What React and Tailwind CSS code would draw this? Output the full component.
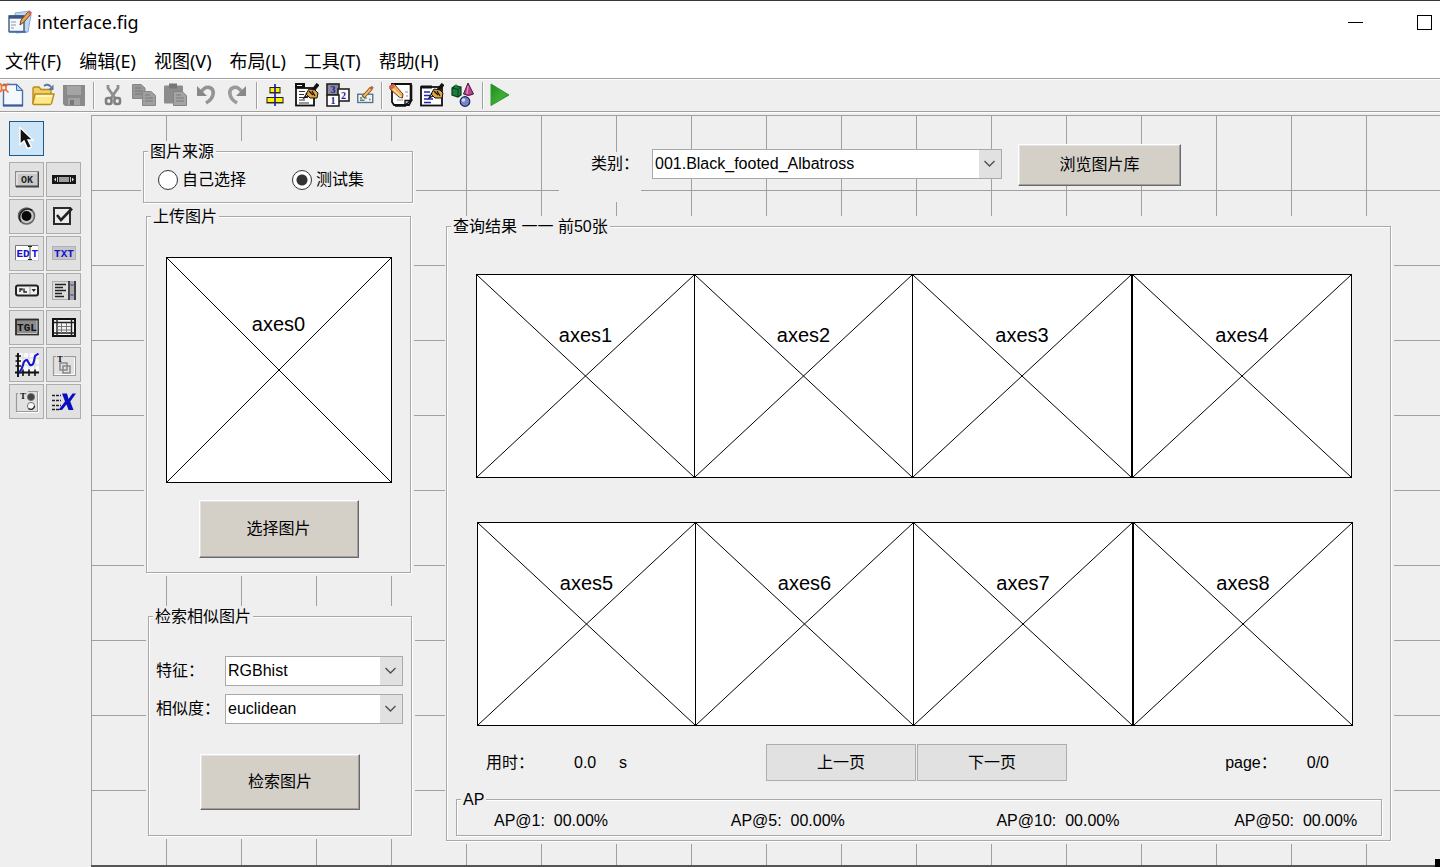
import React from "react";

const CJK = "font-['Liberation_Sans','Noto_Sans_CJK_SC',sans-serif]";

function Icon({ size = 24, children }) {
  return (
    <svg width={size} height={size} viewBox="0 0 24 24" fill="none" aria-hidden="true">
      {children}
    </svg>
  );
}

/* ---------- toolbar drawings ---------- */

const NewFile = () => (
  <Icon>
    <path d="M3.500 1.500H16.500L22.500 7.500V22.500H3.500Z" fill="#f4f9ff" stroke="#4a6fae" strokeWidth="1.400" />
    <path d="M16.500 1.500V7.500H22.500Z" fill="#b9d2f2" stroke="#4a6fae" />
    <path d="M3 22.500H23" stroke="#38589a" strokeWidth="2" />
    <rect x="1.500" y="2.500" width="4.500" height="4.500" fill="#fff0c8" stroke="#ee6a35" strokeWidth="1.600" />
    <path d="M0 0.500L1.500 2M8.500 0.500L6 3M8.500 9.500L6 7M0 9L1.500 7.500" stroke="#ee6a35" strokeWidth="1.600" />
  </Icon>
);
const OpenFile = () => (
  <Icon>
    <path d="M2 21V5.500Q2 4 3.500 4H8L10 6.500H20V11" fill="#f2cf62" stroke="#b98a1c" strokeWidth="1.400" />
    <path d="M4 11H23L20.500 20.500Q20 21.500 18.500 21.500H3Q1.500 21.500 2 20Z" fill="#fde98a" stroke="#b98a1c" strokeWidth="1.400" />
    <path d="M5 13H21" stroke="#fffbd8" strokeWidth="1.500" />
    <path d="M13 3Q17 0 20 4" stroke="#5878a0" strokeWidth="1.800" />
    <path d="M22.500 1.500V7H17Z" fill="#5878a0" />
  </Icon>
);
const Save = () => (
  <Icon>
    <path d="M1 2H23V23H3L1 21Z" fill="#8a8a8a" />
    <rect x="5" y="3" width="14" height="9" fill="#a4a4a4" />
    <rect x="6" y="15" width="12" height="7" fill="#a2a2a2" />
    <rect x="8" y="17" width="4" height="5" fill="#777" />
  </Icon>
);
const Cut = () => (
  <Icon>
    <path d="M7 2V5L14 15M17 2V5L10 15" stroke="#8f8f8f" strokeWidth="2.800" />
    <rect x="5" y="15" width="5.500" height="6" rx="2" stroke="#7f7f7f" strokeWidth="2.600" />
    <rect x="13.500" y="15" width="5.500" height="6" rx="2" stroke="#7f7f7f" strokeWidth="2.600" />
  </Icon>
);
const Copy = () => (
  <Icon>
    <path d="M0.500 1.500H9L13 5V15.500H0.500Z" fill="#989898" stroke="#878787" />
    <path d="M3 5H9M3 8H10M3 11H10" stroke="#7b7b7b" />
    <path d="M10.500 8.500H19L23.500 12.500V22.500H10.500Z" fill="#a0a0a0" stroke="#878787" />
    <path d="M13 12H18M13 15H21M13 18H21" stroke="#7b7b7b" />
  </Icon>
);
const Paste = () => (
  <Icon>
    <rect x="1" y="2.500" width="19" height="18" rx="1" fill="#8c8c8c" />
    <rect x="6" y="0.500" width="8" height="5" fill="#777" />
    <path d="M10.500 8.500H19L23.500 12.500V22.500H10.500Z" fill="#a4a4a4" stroke="#838383" />
    <path d="M13 12H18M13 15H21M13 18H21" stroke="#7b7b7b" />
  </Icon>
);
const Undo = () => (
  <Icon>
    <path d="M7 9Q11 3 15.500 4.500Q20 6 19 11.500Q18 16.500 12 20" stroke="#939393" strokeWidth="3.600" />
    <path d="M3 3V13H13Z" fill="#888" />
  </Icon>
);
const Redo = () => (
  <Icon>
    <path d="M17 9Q13 3 8.500 4.500Q4 6 5 11.500Q6 16.500 12 20" stroke="#9b9b9b" strokeWidth="3.600" />
    <path d="M21 3V13H11Z" fill="#888" />
  </Icon>
);
const Align = () => (
  <Icon>
    <rect x="6" y="4.500" width="10" height="5" fill="#ffee00" stroke="#222" />
    <rect x="3" y="14.500" width="16" height="5" fill="#ffee00" stroke="#222" />
    <path d="M11 1V23" stroke="#1414b8" strokeWidth="1.600" />
    <path d="M5.500 10H16.500M2.500 20H19.500" stroke="#333" />
  </Icon>
);
const Hand = () => (
  <>
    <path d="M23 1L16 10" stroke="#111" strokeWidth="3.600" />
    <path d="M11 11L14 6L20 7L23 10L22 15L15 15Z" fill="#e0a63c" stroke="#111" />
    <path d="M12 10L9 15L13 13M14 8L18 12M17 8L20 13" stroke="#111" strokeWidth="1.200" />
  </>
);
const MenuEditor = () => (
  <Icon>
    <rect x="0" y="0" width="10" height="5" fill="#111" />
    <path d="M2 2.500H7" stroke="#fff" />
    <rect x="1" y="5" width="18" height="17.500" fill="#fff" stroke="#111" strokeWidth="1.800" />
    <path d="M4 8.500H10M4 11.500H9M4 14.500H13M4 17H10M4 20H14" stroke="#333" />
    <Hand />
  </Icon>
);
const TabOrder = () => (
  <Icon>
    <rect x="1" y="1" width="12" height="11" fill="#8a8a9c" stroke="#222" strokeWidth="1.600" />
    <rect x="12" y="6" width="11" height="12" fill="#fff" stroke="#222" strokeWidth="1.600" />
    <rect x="1" y="12" width="12" height="11" fill="#fff" stroke="#222" strokeWidth="1.600" />
    <g className="font-['Liberation_Serif',serif]" fontWeight="700" fontSize="10" fill="#1c1c98" textAnchor="middle">
      <text x="7" y="10">3</text>
      <text x="17.500" y="15.500">2</text>
      <text x="7" y="21">1</text>
    </g>
  </Icon>
);
const ToolbarEditor = () => (
  <Icon size={18}>
    <rect x="1" y="11" width="20" height="11" fill="#eef3fa" stroke="#58708c" strokeWidth="1.800" />
    <path d="M4 16H7M10 16H13M16 18H18M4 19H10" stroke="#4a8a6a" strokeWidth="2" />
    <path d="M8 15L19 3" stroke="#7a4a1c" strokeWidth="5" />
    <path d="M9 14L19 3" stroke="#f3c05e" strokeWidth="2.600" />
    <path d="M18 4L21 1" stroke="#c85846" strokeWidth="4" />
  </Icon>
);
const MFile = () => (
  <Icon>
    <path d="M3 1H22V18L20 22H5L3 19Z" fill="#fff" stroke="#111" strokeWidth="1.800" />
    <path d="M22 2V18M17 22.500H6" stroke="#111" strokeWidth="2.600" />
    <path d="M16 22V17.500L22 17.500Z" fill="#ddd" stroke="#111" strokeWidth="1.400" />
    <path d="M8 17H14M16 9H19M17 13H19" stroke="#8a94a0" />
    <path d="M1 3L5 1L14 11L13.500 15L10 14L1 6Z" fill="#f0b060" stroke="#6a3a18" />
    <path d="M0 3L4 1L6 4L2 7Z" fill="#d8604c" />
    <path d="M4 6L12 14" stroke="#fce0a8" strokeWidth="1.400" />
  </Icon>
);
const PropertyInspector = () => (
  <Icon>
    <rect x="1" y="4" width="21" height="18.500" fill="#fff" stroke="#111" strokeWidth="1.800" />
    <path d="M1 4H12" stroke="#111" strokeWidth="3" />
    <path d="M4 9H10M4 12.500H10M4 16H13M4 19.500H11" stroke="#2424b4" strokeWidth="1.500" />
    <Hand />
  </Icon>
);
const ObjectBrowser = () => (
  <Icon>
    <path d="M1 5L4 3L10 4V12L7 14L1 12Z" fill="#18803c" stroke="#0b3c1c" strokeWidth="1.200" />
    <path d="M1 5L7 6.500L10 4M7 6.500V14" stroke="#0b3c1c" />
    <path d="M5 1V4M3 2.500H7" stroke="#2a9a4a" />
    <path d="M17 0L22.500 11Q17.500 14 12.500 11Z" fill="#b8408c" stroke="#4a1638" />
    <path d="M17 3L16 11" stroke="#e48cc4" strokeWidth="1.400" />
    <circle cx="14" cy="18.500" r="4.800" fill="#7484c8" stroke="#1c2450" strokeWidth="1.200" />
    <circle cx="12.500" cy="17" r="1.800" fill="#d4dcfa" />
  </Icon>
);
const Run = () => (
  <Icon>
    <defs>
      <linearGradient id="run" x1="0" y1="0" x2="1" y2="1">
        <stop offset="0" stopColor="#1f8a1f" />
        <stop offset="0.600" stopColor="#3fae35" />
        <stop offset="1" stopColor="#1d7a1d" />
      </linearGradient>
    </defs>
    <path d="M1 1L19 12L1 22.500Z" fill="url(#run)" stroke="#2f9a2c" />
  </Icon>
);

/* ---------- palette drawings ---------- */

const Arrow = () => (
  <Icon>
    <path d="M5 0.500V17.500L9 14L12.500 21.500L16.500 20L13 13H18Z" fill="#111" stroke="#fff" strokeWidth="1.400" />
  </Icon>
);
const PixelText = ({ y = 15, fill, children, size = 9 }) => (
  <text x="12" y={y} textAnchor="middle" fontSize={size} fontWeight="700" fill={fill} className="font-['Liberation_Mono',monospace]">
    {children}
  </text>
);
const PushButton = () => (
  <Icon>
    <rect x="0.500" y="3.500" width="23" height="15" fill="#c9c9c9" stroke="#8a8a8a" />
    <path d="M1 18.500H23.500V4" stroke="#444" strokeWidth="1.800" />
    <path d="M2 17V5H22" stroke="#f5f5f5" />
    <PixelText fill="#222" y={14.500} size={10}>OK</PixelText>
  </Icon>
);
const SliderIcon = () => (
  <Icon>
    <rect x="0" y="7" width="24" height="9" fill="#161616" />
    <rect x="7" y="9" width="10" height="5" fill="#9d9d9d" />
    <path d="M2 11.500L4 9.500V13.500ZM22 11.500L20 9.500V13.500Z" fill="#ddd" />
    <path d="M5.500 9V14M18.500 9V14" stroke="#ccc" />
  </Icon>
);
const RadioIcon = () => (
  <Icon>
    <circle cx="11.500" cy="11" r="8" fill="#c9c9c9" stroke="#666" strokeWidth="1.600" />
    <path d="M5.900 16.500A8 8 0 0 1 17.100 5.500" stroke="#222" strokeWidth="1.800" />
    <circle cx="11.500" cy="11" r="5" fill="#080808" />
  </Icon>
);
const CheckIcon = () => (
  <Icon>
    <rect x="2" y="3" width="16" height="16" fill="#ececec" stroke="#2b2b2b" strokeWidth="2" />
    <path d="M5 10L9 15L20 3.500" stroke="#222" strokeWidth="2.600" />
  </Icon>
);
const EditIcon = () => (
  <Icon>
    <rect x="0.500" y="3.500" width="23" height="15" fill="#fff" stroke="#ccc" />
    <path d="M0.500 18V3.500H23" stroke="#777" />
    <text x="1.500" y="14.500" fontSize="11" fontWeight="700" fill="#1414d2" className="font-['Liberation_Mono',monospace]">ED</text>
    <text x="16.500" y="14.500" fontSize="11" fontWeight="700" fill="#1414d2" className="font-['Liberation_Mono',monospace]">T</text>
    <path d="M13 4.500H17M13 17.500H17M15 4V18" stroke="#222" />
  </Icon>
);
const TxtIcon = () => (
  <Icon>
    <rect x="0.500" y="4.500" width="23" height="13" fill="#c6c6c6" stroke="#b2b2b2" />
    <PixelText fill="#1414d2" y={14.500} size={11}>TXT</PixelText>
  </Icon>
);
const PopupIcon = () => (
  <Icon>
    <rect x="1" y="6.500" width="22" height="10" rx="2" fill="#f2f2f2" stroke="#222" strokeWidth="2" />
    <path d="M15 7.500V15.500" stroke="#999" />
    <path d="M5 13V10H7V11.500M9 9.500V13H12" stroke="#222" strokeWidth="1.400" />
    <path d="M16.500 10H21L18.800 13Z" fill="#222" />
  </Icon>
);
const ListIcon = () => (
  <Icon>
    <rect x="0.500" y="2.500" width="23" height="18" fill="#dcdcdc" stroke="#aaa" />
    <path d="M3 5.500H14M3 8.500H11M3 11.500H14M3 14.500H10M3 17.500H12" stroke="#222" strokeWidth="1.600" />
    <rect x="18" y="3" width="4.500" height="17" fill="#aaa" />
    <path d="M17 2V21M23 2V21" stroke="#222" strokeWidth="1.600" />
    <path d="M18.500 6H21.500M18.500 16H21.500" stroke="#4455dd" strokeWidth="1.500" />
  </Icon>
);
const ToggleIcon = () => (
  <Icon>
    <rect x="1" y="3.500" width="22" height="15" fill="#8c8c8c" stroke="#2d2d2d" strokeWidth="1.800" />
    <path d="M2 17.500H22V4.500" stroke="#c4c4c4" />
    <PixelText fill="#111" y={14.500} size={11}>TGL</PixelText>
  </Icon>
);
const TableIcon = () => (
  <Icon>
    <rect x="1" y="3" width="22" height="17" fill="#f4f4f4" stroke="#111" strokeWidth="2" />
    <path d="M5 3V20M19.500 3V20M1 6.500H23M1 17H23" stroke="#222" strokeWidth="1.400" />
    <path d="M9.500 7V17M14.500 7V17M5 10.500H19M5 14H19" stroke="#777" />
  </Icon>
);
const AxesIcon = () => (
  <Icon>
    <rect x="4" y="0" width="20" height="18" fill="#f8f8f8" />
    <path d="M8 0V18M14 0V18M20 0V18M4 5H24M4 12H24" stroke="#d5d5d5" />
    <path d="M3 0V24M0 19.500H24" stroke="#111" strokeWidth="1.900" />
    <path d="M0.500 3H6M0.500 8H6M0.500 13H6M8 16.500V23M14 16.500V23M20 16.500V23" stroke="#111" strokeWidth="1.600" />
    <path d="M4 20Q7 16 8 12Q9 7 12 7L15 12Q18 13 19 8L20 3L23.500 0.500" stroke="#1414d2" strokeWidth="2.100" />
  </Icon>
);
const SmallT = () => (
  <text x="5" y="9" fontSize="9" fontWeight="700" fill="#111" className="font-['Liberation_Serif',serif]">T</text>
);
const PanelIcon = () => (
  <Icon>
    <path d="M4 3.500H1.500V22.500H23.500V3.500H12" stroke="#9a9a9a" strokeWidth="1.200" />
    <path d="M2.500 21.500H22.500V5" stroke="#fff" />
    <SmallT />
    <rect x="8" y="10" width="7" height="7" stroke="#888" strokeWidth="1.500" />
    <rect x="11" y="13" width="7" height="7" stroke="#888" strokeWidth="1.500" />
  </Icon>
);
const ButtonGroupIcon = () => (
  <Icon>
    <path d="M3 3.500H1.500V21.500H22.500V1.500H13" stroke="#9a9a9a" strokeWidth="1.200" />
    <path d="M2.500 22.500H23.500V2" stroke="#fff" />
    <SmallT />
    <circle cx="16" cy="7" r="3.600" fill="#444" stroke="#777" />
    <circle cx="16" cy="16" r="3.600" fill="#f6f6f6" stroke="#777" />
    <path d="M13.500 18.500A3.600 3.600 0 0 0 19.500 16" stroke="#222" strokeWidth="1.300" />
  </Icon>
);
const ActiveXIcon = () => (
  <Icon>
    <path d="M0 5.500H9M0 10.500H9M0 15.500H9M0 19.500H7" stroke="#222" strokeWidth="1.400" strokeDasharray="3 1" />
    <path d="M10 3.500H15L16.500 9L20.500 3.500H24L18.300 11.500L21.500 20H16.500L14.500 14.500L10 20H6.500L13 11.500Z" fill="#0c0cc0" />
  </Icon>
);

/* ---------- controls ---------- */

const TOOLS = [
  ["New", NewFile],
  ["Open", OpenFile],
  ["Save", Save],
  null,
  ["Cut", Cut],
  ["Copy", Copy],
  ["Paste", Paste],
  ["Undo", Undo],
  ["Redo", Redo],
  null,
  ["Align Objects", Align],
  ["Menu Editor", MenuEditor],
  ["Tab Order Editor", TabOrder],
  ["Toolbar Editor", ToolbarEditor],
  null,
  ["Editor", MFile],
  ["Property Inspector", PropertyInspector],
  ["Object Browser", ObjectBrowser],
  null,
  ["Run", Run],
];

const PALETTE = [
  ["Push Button", PushButton],
  ["Slider", SliderIcon],
  ["Radio Button", RadioIcon],
  ["Check Box", CheckIcon],
  ["Edit Text", EditIcon],
  ["Static Text", TxtIcon],
  ["Pop-up Menu", PopupIcon],
  ["Listbox", ListIcon],
  ["Toggle Button", ToggleIcon],
  ["Table", TableIcon],
  ["Axes", AxesIcon],
  ["Panel", PanelIcon],
  ["Button Group", ButtonGroupIcon],
  ["ActiveX Control", ActiveXIcon],
];

function Panel({ title, className = "", bodyClass = "", children }) {
  return (
    <div className={`bg-[#efefef] ${className}`}>
      <fieldset className="min-w-0 border border-[#a9a9a9] shadow-[1px_1px_0_#fff,inset_1px_1px_0_#fff]">
        <legend className="ml-1 h-5 bg-[#efefef] px-0.5 leading-[22px]">{title}</legend>
        <div className={bodyClass}>{children}</div>
      </fieldset>
    </div>
  );
}

function Axes({ name, className = "" }) {
  return (
    <div className={`relative border border-black bg-white ${className}`}>
      <svg className="absolute inset-0 h-full w-full" viewBox="0 0 100 100" preserveAspectRatio="none" aria-hidden="true">
        <path d="M0 0L100 100M100 0L0 100" stroke="#000" vectorEffect="non-scaling-stroke" />
      </svg>
      <div className="relative flex h-[59%] items-center justify-center text-xl leading-6">{name}</div>
    </div>
  );
}

function Raised({ className = "", children }) {
  return (
    <button
      type="button"
      className={`border border-t-white border-r-[#696969] border-b-[#696969] border-l-white bg-[#d4d0c8] shadow-[inset_-1px_-1px_0_#a0a0a0,inset_1px_1px_0_#e3e3e3] ${className}`}
    >
      {children}
    </button>
  );
}

function Select({ id, value, className = "" }) {
  return (
    <div className={`relative h-[30px] ${className}`}>
      <select id={id} defaultValue={value} className="h-full w-full appearance-none rounded-none border border-[#a9a9a9] bg-white pr-6 pl-0.5">
        <option>{value}</option>
      </select>
      <span className="pointer-events-none absolute inset-y-px right-px flex w-[22px] items-center justify-center bg-[#e1e1e1]">
        <svg width="12" height="8" viewBox="0 0 12 8" fill="none" aria-hidden="true">
          <path d="M0.500 1L5.500 6L10.500 1" stroke="#505050" strokeWidth="1.400" />
        </svg>
      </span>
    </div>
  );
}

function Radio({ label, checked, className = "" }) {
  return (
    <label className={`flex items-center gap-1 leading-5 ${className}`}>
      <input
        type="radio"
        name="source"
        defaultChecked={checked}
        className="h-5 w-5 appearance-none rounded-full border border-[#333] bg-white checked:bg-[radial-gradient(circle,#333_5px,#fff_6px)]"
      />
      {label}
    </label>
  );
}

export default function App() {
  return (
    <div lang="zh-CN" className={`flex min-h-screen flex-col bg-[#efefef] text-base text-black ${CJK}`}>
      <header className="border-t border-[#34353f] bg-white font-['Noto_Sans','Noto_Sans_CJK_SC',sans-serif]">
        <div className="flex h-[42px] items-center pr-2 pl-2">
          <svg width="24" height="24" viewBox="0 0 24 24" fill="none" aria-hidden="true">
            <path d="M7 3L22 1L23 5L20 22L8 23Z" fill="#c3d8f2" stroke="#8aaad4" />
            <rect x="1" y="6" width="15" height="15.500" fill="#f5f8fd" stroke="#40587c" strokeWidth="1.400" />
            <path d="M1 7H16" stroke="#3c5684" strokeWidth="3.400" />
            <path d="M3 12H8M3 15H8M3 18H6" stroke="#8a98ac" strokeWidth="1.200" />
            <path d="M1 22H18" stroke="#4870b0" strokeWidth="1.600" />
            <path d="M12 15L13 10L20 2L23 4L16 12Z" fill="#e6a44a" stroke="#6a4424" />
            <path d="M19 2.500L21 0.500L24 2.500L22.500 5Z" fill="#d6664c" />
          </svg>
          <h1 className="ml-[5px] text-lg leading-6">interface.fig</h1>
          <div className="ml-auto flex items-center gap-[54px]">
            <button type="button" aria-label="Minimize" className="flex h-[15px] w-[15px] items-center">
              <span className="h-px w-full bg-black" />
            </button>
            <button type="button" aria-label="Maximize" className="h-[15px] w-[15px] border border-black" />
          </div>
        </div>
        <nav className="flex h-[35px] items-center gap-[18px] pl-[5px] text-lg leading-6">
          {["文件(F)", "编辑(E)", "视图(V)", "布局(L)", "工具(T)", "帮助(H)"].map((m) => (
            <button key={m} type="button">{m}</button>
          ))}
        </nav>
      </header>

      <div role="toolbar" className="flex h-[34px] items-center gap-1.5 border-y border-[#a0a0a0] shadow-[inset_0_1px_0_#fff,0_1px_0_#fff]">
        {TOOLS.map((t, i) => {
          if (!t) return <span key={i} className="h-[27px] w-0.5 border-r border-l border-r-white border-l-[#a0a0a0]" />;
          const [label, Pic] = t;
          return (
            <button key={i} type="button" aria-label={label} className={label === "Toolbar Editor" ? "w-[18px]" : "w-[25px]"}>
              <Pic />
            </button>
          );
        })}
      </div>

      <div className="flex flex-1 pt-[3px]">
        <aside className="w-[91px] shrink-0 pt-1.5 pl-[9px]">
          <button type="button" aria-label="Select" className="flex h-[35px] w-[35px] items-center justify-center border border-[#1c5a8c] bg-[#cce4f7]">
            <Arrow />
          </button>
          <div className="mt-1.5 flex flex-wrap gap-0.5">
            {PALETTE.map(([label, Pic]) => (
              <button key={label} type="button" aria-label={label} className="flex h-[35px] w-[35px] items-center justify-center border border-[#adadad] bg-[#e1e1e1]">
                <Pic />
              </button>
            ))}
          </div>
        </aside>

        <main className="relative flex min-w-0 flex-1 items-start border-b-2 border-b-[#555] bg-[linear-gradient(to_right,#a0a0a0_1px,transparent_1px),linear-gradient(to_bottom,#a0a0a0_1px,transparent_1px)] bg-[size:75px_75px] pb-[21px] pl-[50px]">
          <div className="w-[275px] shrink-0 pt-[26px]">
            <div className="bg-[#efefef] pb-px">
              <Panel title="图片来源" className="pr-[3px] pb-0.5 pl-0.5" bodyClass="flex pt-[9px] pb-3 pl-3.5">
                <Radio label="自己选择" className="w-[134px]" />
                <Radio label="测试集" checked />
              </Panel>
            </div>

            <Panel title="上传图片" className="ml-[3px] w-[270px] pr-[3px] pb-[3px] pl-0.5" bodyClass="flex flex-col items-center pt-[31px] pb-3.5">
              <Axes name="axes0" className="h-[226px] w-[226px]" />
              <Raised className="mt-[17px] h-[58px] w-[160px]">选择图片</Raised>
            </Panel>

            <Panel title="检索相似图片" className="mt-[30px] ml-[5px] w-[269px] pr-[3px] pb-[3px] pl-0.5" bodyClass="flex flex-col items-center pt-[30px] pb-[25px]">
              <div className="grid w-full grid-cols-[1fr_178px] items-center gap-y-2 pr-2 pl-[7px]">
                <label htmlFor="feature">特征：</label>
                <Select id="feature" value="RGBhist" />
                <label htmlFor="similarity">相似度：</label>
                <Select id="similarity" value="euclidean" />
              </div>
              <Raised className="mt-[30px] h-[56px] w-[160px]">检索图片</Raised>
            </Panel>
          </div>

          <div className="mr-[46px] ml-[29px] min-w-0 flex-1">
            <div className="flex h-[101px] items-start">
              <label htmlFor="category" className="mt-[37px] ml-[114px] h-[50px] w-[82px] bg-[#efefef] pl-8 leading-6">类别：</label>
              <Select id="category" value="001.Black_footed_Albatross" className="mt-[34px] ml-[11px] w-[350px]" />
              <Raised className="mt-[29px] ml-4 h-[42px] w-[163px]">浏览图片库</Raised>
            </div>

            <Panel title="查询结果 一一 前50张" className="pr-[3px] pb-[3px] pl-px" bodyClass="pt-[38px] pb-1">
              <div className="mr-[38px] ml-[29px] grid h-[204px] grid-cols-[218fr_218fr_220fr_220fr]">
                <Axes name="axes1" className="-mr-px" />
                <Axes name="axes2" className="-mr-px" />
                <Axes name="axes3" />
                <Axes name="axes4" />
              </div>
              <div className="mt-[44px] mr-[37px] ml-[30px] grid h-[204px] grid-cols-[218fr_218fr_220fr_220fr]">
                <Axes name="axes5" className="-mr-px" />
                <Axes name="axes6" className="-mr-px" />
                <Axes name="axes7" />
                <Axes name="axes8" />
              </div>

              <div className="mt-[18px] grid grid-cols-[1fr_301px_1fr] items-center pr-1">
                <div className="flex pl-[39px] leading-5">
                  <span className="w-[88px]">用时：</span>
                  <span className="w-[45px]">0.0</span>
                  <span>s</span>
                </div>
                <div className="grid h-[37px] grid-cols-2 gap-px">
                  <button type="button" className="border border-[#adadad] bg-[#e1e1e1]">上一页</button>
                  <button type="button" className="border border-[#adadad] bg-[#e1e1e1]">下一页</button>
                </div>
                <div className="flex justify-end gap-[30px] pr-[57px] leading-5">
                  <span>page：</span>
                  <span>0/0</span>
                </div>
              </div>

              <Panel title="AP" className="mt-2 mr-2 ml-[9px]" bodyClass="grid grid-cols-[237fr_266fr_238fr_147fr] pt-0.5 pb-1 pl-[37px] leading-5">
                <span className="whitespace-pre">{"AP@1:  00.00%"}</span>
                <span className="whitespace-pre">{"AP@5:  00.00%"}</span>
                <span className="whitespace-pre">{"AP@10:  00.00%"}</span>
                <span className="whitespace-pre">{"AP@50:  00.00%"}</span>
              </Panel>
            </Panel>
          </div>

          <span className="absolute right-0 -bottom-0.5 h-2 w-[5px] bg-black" />
        </main>
      </div>
    </div>
  );
}
